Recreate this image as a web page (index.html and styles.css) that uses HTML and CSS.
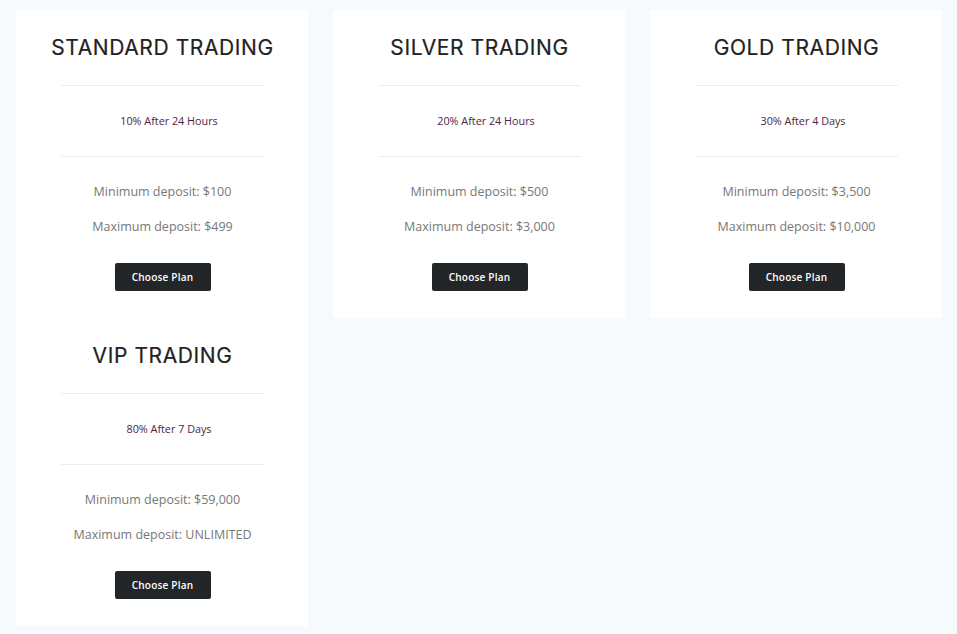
FILE: index.html
```html
<!DOCTYPE html>
<html>
<head>
<meta charset="utf-8">
<link rel="stylesheet" href="styles.css">
</head>
<body>
<div class="plans">
  <div class="card">
    <h2 class="title">STANDARD TRADING</h2>
    <hr class="rule">
    <p class="rate">10% After 24 Hours</p>
    <hr class="rule">
    <p class="dep">Minimum deposit: $100</p>
    <p class="dep dep2">Maximum deposit: $499</p>
    <button class="btn">Choose Plan</button>
  </div>
  <div class="card">
    <h2 class="title">SILVER TRADING</h2>
    <hr class="rule">
    <p class="rate">20% After 24 Hours</p>
    <hr class="rule">
    <p class="dep">Minimum deposit: $500</p>
    <p class="dep dep2">Maximum deposit: $3,000</p>
    <button class="btn">Choose Plan</button>
  </div>
  <div class="card">
    <h2 class="title">GOLD TRADING</h2>
    <hr class="rule">
    <p class="rate">30% After 4 Days</p>
    <hr class="rule">
    <p class="dep">Minimum deposit: $3,500</p>
    <p class="dep dep2">Maximum deposit: $10,000</p>
    <button class="btn">Choose Plan</button>
  </div>
  <div class="card">
    <h2 class="title">VIP TRADING</h2>
    <hr class="rule">
    <p class="rate">80% After 7 Days</p>
    <hr class="rule">
    <p class="dep">Minimum deposit: $59,000</p>
    <p class="dep dep2">Maximum deposit: UNLIMITED</p>
    <button class="btn">Choose Plan</button>
  </div>
</div>
</body>
</html>
```

FILE: styles.css
```css
html, body {
  margin: 0;
  padding: 0;
  background: #f6fafd;
}
body {
  font-family: "Open Sans", "Liberation Sans", sans-serif;
}
.plans {
  display: grid;
  grid-template-columns: repeat(3, 292px);
  column-gap: 25px;
  row-gap: 0;
  padding: 10px 15px 0 16px;
  align-items: start;
}
.card {
  background: #ffffff;
  padding: 25px 44px 27px 45px;
  display: flex;
  flex-direction: column;
  align-items: center;
  height: 308px;
  box-sizing: border-box;
}
.title {
  margin: 0;
  font-family: Inter, "Noto Sans", sans-serif;
  font-weight: 400;
  font-size: 21px;
  line-height: 26px;
  letter-spacing: 0.6px;
  color: #222;
  text-align: center;
  white-space: nowrap;
  flex-shrink: 0;
  -webkit-text-stroke: 0.2px #222;
}
.rule {
  align-self: stretch;
  border: 0;
  border-top: 1px solid #ededed;
  margin: 24px 0 0 0;
  height: 0;
  flex-shrink: 0;
}
.rate + .rule {
  margin-top: 27px;
}
.rate {
  margin: 27px 0 0 0;
  padding-left: 13px;
  font-size: 10.8px;
  line-height: 16px;
  color: #4e2446;
  white-space: nowrap;
}
.dep {
  margin: 25px 0 0 0;
  font-size: 12.5px;
  line-height: 20px;
  color: #777;
  white-space: nowrap;
}
.dep2 {
  margin-top: 15px;
}
.btn {
  margin-top: 26px;
  width: 96px;
  height: 28px;
  flex-shrink: 0;
  background: #232628;
  color: #fff;
  border: 0;
  border-radius: 2px;
  font-family: "Open Sans", sans-serif;
  font-weight: 600;
  font-size: 10px;
  letter-spacing: 0.2px;
  padding: 0;
}
```
